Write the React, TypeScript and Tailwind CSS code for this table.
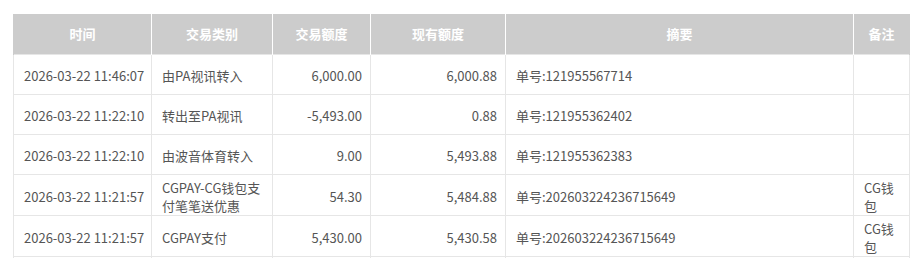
import React from "react";

const rows = [
  ["2026-03-22 11:46:07", "由PA视讯转入", "6,000.00", "6,000.88", "单号:121955567714", ""],
  ["2026-03-22 11:22:10", "转出至PA视讯", "-5,493.00", "0.88", "单号:121955362402", ""],
  ["2026-03-22 11:22:10", "由波音体育转入", "9.00", "5,493.88", "单号:121955362383", ""],
  ["2026-03-22 11:21:57", "CGPAY-CG钱包支付笔笔送优惠", "54.30", "5,484.88", "单号:202603224236715649", "CG钱包"],
  ["2026-03-22 11:21:57", "CGPAY支付", "5,430.00", "5,430.58", "单号:202603224236715649", "CG钱包"],
  ["", "", "", "", "", ""],
];

const heads = ["时间", "交易类别", "交易额度", "现有额度", "摘要", "备注"];

export default function App() {
  return (
    <div
      className="w-[920px] h-[258px] overflow-hidden bg-white pt-[14px] pl-[13px]"
      style={{ fontFamily: '"Noto Sans CJK SC", "Noto Sans", sans-serif' }}
    >
      <table className="table-fixed border-collapse w-[896px] text-[13px] text-[#555]">
        <colgroup>
          <col className="w-[138px]" />
          <col className="w-[121px]" />
          <col className="w-[98px]" />
          <col className="w-[135px]" />
          <col className="w-[348px]" />
          <col className="w-[56px]" />
        </colgroup>
        <thead>
          <tr className="h-[40px] bg-[#cccccc]">
            {heads.map((h, i) => (
              <th
                key={i}
                className="border-l border-r border-white first:border-l-[#cccccc] last:border-r-[#cccccc] text-center font-bold text-white p-0"
              >
                {h}
              </th>
            ))}
          </tr>
        </thead>
        <tbody>
          {rows.map((r, ri) => (
            <tr key={ri} className="h-[40px]">
              <td className="border border-[#e6e6e6] pt-[4px] pl-[10px] pr-[4px] leading-[18px] whitespace-nowrap">{r[0]}</td>
              <td className="border border-[#e6e6e6] pt-[4px] pl-[10px] pr-[8px] leading-[18px]">{r[1]}</td>
              <td className="border border-[#e6e6e6] pt-[4px] pr-[8px] text-right leading-[18px]">{r[2]}</td>
              <td className="border border-[#e6e6e6] pt-[4px] pr-[8px] text-right leading-[18px]">{r[3]}</td>
              <td className="border border-[#e6e6e6] pt-[4px] pl-[10px] leading-[18px]">{r[4]}</td>
              <td className="border border-[#e6e6e6] pt-[4px] pl-[10px] pr-[8px] leading-[18px] break-all">{r[5]}</td>
            </tr>
          ))}
        </tbody>
      </table>
    </div>
  );
}
